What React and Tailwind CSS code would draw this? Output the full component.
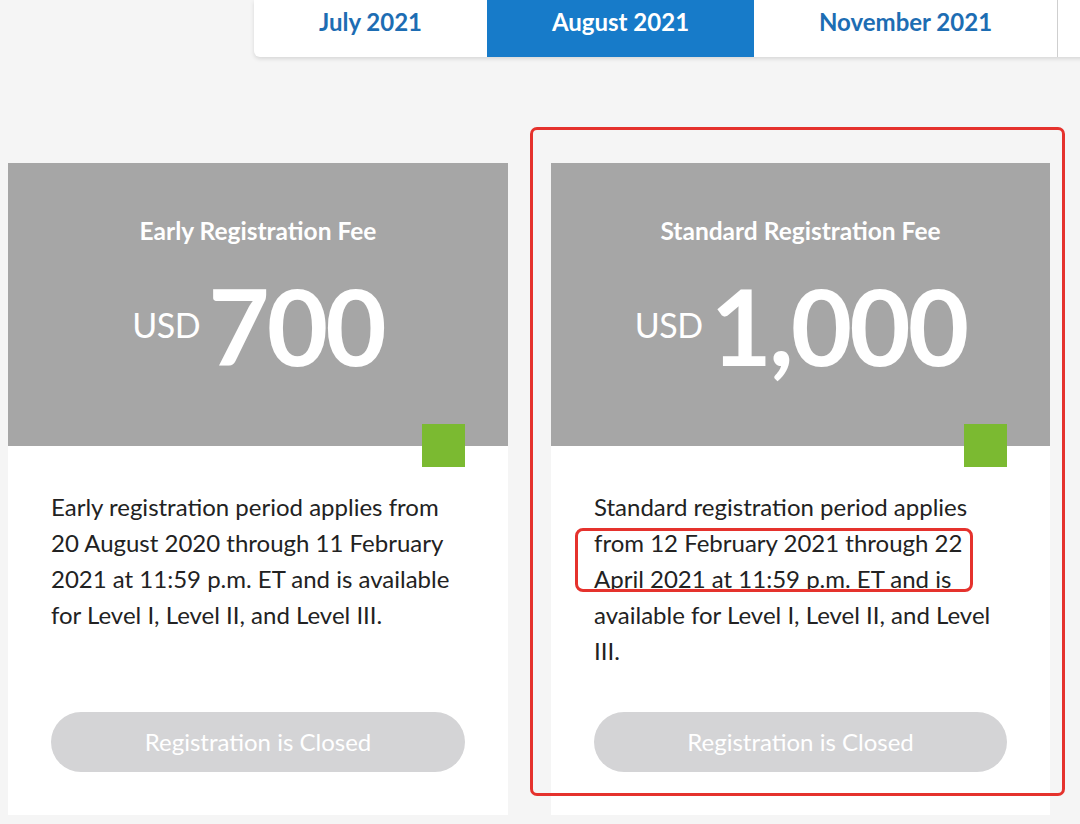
export default function App() {
  const font = { fontFamily: 'Lato, "Open Sans", sans-serif' };
  return (
    <div className="relative w-[1080px] h-[824px] overflow-hidden bg-[#f5f5f5]" style={font}>
      {/* Tabs */}
      <div className="flex pl-[254px]">
        <div className="flex shrink-0 h-[57px] bg-white rounded-bl-[6px] shadow-[0_2px_4px_rgba(0,0,0,0.12)] overflow-hidden">
          <div className="w-[233px] shrink-0 flex justify-center pt-[8px] leading-[28px] text-[24px] font-bold text-[#1d6db3]">July 2021</div>
          <div className="w-[267px] shrink-0 flex justify-center pt-[8px] leading-[28px] text-[24px] font-bold text-white bg-[#177bc9]">August 2021</div>
          <div className="w-[304px] shrink-0 flex justify-center pt-[8px] leading-[28px] text-[24px] font-bold text-[#1d6db3] border-r border-[#cfcfcf]">November 2021</div>
          <div className="w-[60px] shrink-0"></div>
        </div>
      </div>

      {/* Cards */}
      <div className="flex gap-[43px] pl-[8px] mt-[106px]">
        <Card
          title="Early Registration Fee"
          amount="700"
          text="Early registration period applies from 20 August 2020 through 11 February 2021 at 11:59 p.m. ET and is available for Level I, Level II, and Level III."
          width="w-[500px]"
        />
        <Card
          title="Standard Registration Fee"
          amount="1,000"
          text="Standard registration period applies from 12 February 2021 through 22 April 2021 at 11:59 p.m. ET and is available for Level I, Level II, and Level III."
          width="w-[499px]"
        />
      </div>

      {/* Annotations */}
      <div className="absolute left-[530px] top-[127px] w-[535px] h-[669px] border-[3px] border-[#e5322d] rounded-[7px] pointer-events-none"></div>
      <div className="absolute left-[575px] top-[528px] w-[398px] h-[64px] border-[3px] border-[#e5322d] rounded-[8px] pointer-events-none"></div>
    </div>
  );
}

function Card({ title, amount, text, width }) {
  return (
    <div className={`${width} shrink-0 h-[652px] bg-white flex flex-col`}>
      <div className="relative h-[283px] bg-[#a6a6a6] flex flex-col items-center text-white">
        <div className="mt-[53px] text-[24.5px] font-bold leading-[30px]">{title}</div>
        <div className="flex items-center gap-[8px] mt-[24px]">
          <span className="text-[34px] font-normal leading-none tracking-[-0.5px]">USD</span>
          <span className="text-[106px] font-bold leading-[110px] tracking-[-3px]">{amount}</span>
        </div>
        <div className="absolute right-[43px] bottom-[-21px] w-[43px] h-[43px] bg-[#7bba31]"></div>
      </div>
      <div className="flex flex-col flex-1 px-[43px] pt-[43px] pb-[43px]">
        <p className="text-[24px] leading-[36px] text-[#222]">{text}</p>
        <div className="mt-auto h-[60px] rounded-full bg-[#d4d4d6] flex items-center justify-center text-white text-[24px]">
          Registration is Closed
        </div>
      </div>
    </div>
  );
}
